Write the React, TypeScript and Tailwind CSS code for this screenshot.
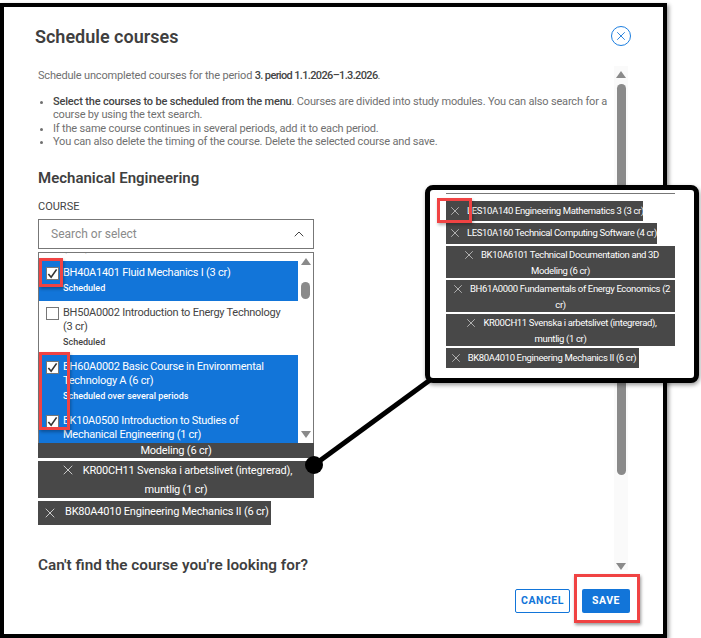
import { ChevronUp, X } from "lucide-react";

const font = "font-['Roboto',sans-serif]";

function CheckBox({ checked }: { checked?: boolean }) {
  return (
    <span className="mt-[1px] w-[13px] h-[13px] shrink-0 bg-white border border-[#777] flex items-center justify-center">
      {checked && (
        <svg viewBox="0 0 12 12" className="w-[11px] h-[11px]">
          <path d="M1.5 6.5 L4.5 10 L10.5 1.5" fill="none" stroke="#333" strokeWidth="1.8" />
        </svg>
      )}
    </span>
  );
}

function CourseItem({ title, note, checked, className = "" }: { title: string; note?: string; checked?: boolean; className?: string }) {
  return (
    <div className={`flex gap-[4px] pl-[7px] pr-2 pt-[5px] ${checked ? "bg-[#1275d9] text-white" : "bg-white text-[#444]"} ${className}`}>
      <CheckBox checked={checked} />
      <div className="min-w-0">
        <div className="text-[11px] tracking-[-0.25px] leading-[14px]">{title}</div>
        {note && <div className="text-[9px] leading-[14px] mt-[1px] font-medium">{note}</div>}
      </div>
    </div>
  );
}

function Triangle({ down }: { down?: boolean }) {
  return (
    <svg viewBox="0 0 10 7" className="w-[10px] h-[7px] shrink-0">
      <path d={down ? "M0 0 H10 L5 7 Z" : "M5 0 L10 7 H0 Z"} fill="#8a8a8a" />
    </svg>
  );
}

function CalloutChip({ label, className = "" }: { label: string; className?: string }) {
  return (
    <div className={`bg-[#484848] text-white text-[9.5px] tracking-[-0.35px] px-[2px] text-center ${className}`}>
      <X className="inline w-[14px] h-[14px] mr-[5px] text-[#ddd] align-[-4px]" strokeWidth={1.2} />
      {label}
    </div>
  );
}

export default function App() {
  return (
    <div className={`relative w-[701px] h-[638px] bg-white overflow-hidden ${font}`}>
      {/* Dialog frame */}
      <div className="w-[667px] h-[635px] mt-[3px] border-[4px] border-black shadow-[2px_2px_4px_rgba(0,0,0,0.4)] bg-white flex flex-col">
        <div className="flex items-center justify-between pl-[31px] pr-[32px] pt-[9px] h-[49px] shrink-0">
          <h1 className="text-[18px] font-semibold text-[#3f3f3f]">Schedule courses</h1>
          <span className="w-5 h-5 rounded-full border border-[#1b7ee0] flex items-center justify-center">
            <X className="w-[14px] h-[14px] text-[#1275d9]" strokeWidth={1.5} />
          </span>
        </div>

        <div className="flex pl-[34px] pr-[29px] flex-1 min-h-0 pt-[8px]">
          <div className="w-[570px] shrink-0">
            <p className="text-[11px] tracking-[-0.18px] leading-[14px] text-[#707070] mt-[5px]">
              Schedule uncompleted courses for the period <span className="text-[#444] font-medium tracking-[-0.65px]">3. period 1.1.2026–1.3.2026</span>.
            </p>
            <ul className="list-disc pl-[15px] mt-[12px] text-[11px] tracking-[-0.17px] leading-[13.4px] text-[#707070]">
              <li>
                <span className="text-[#444] font-medium">Select the courses to be scheduled from the menu</span>. Courses are divided into study modules. You can also search for a course by using the text search.
              </li>
              <li>If the same course continues in several periods, add it to each period.</li>
              <li>You can also delete the timing of the course. Delete the selected course and save.</li>
            </ul>
            <h2 className="text-[15px] font-semibold text-[#3f3f3f] mt-[19px] leading-[20px]">Mechanical Engineering</h2>
            <div className="text-[11px] text-[#444] mt-[12px] leading-[14px]">COURSE</div>

            <div className="w-[276px] mt-[5px] h-[30px] border border-[#777] flex items-center justify-between pl-[12px] pr-[6px]">
              <span className="text-[12px] text-[#8a8a8a]">Search or select</span>
              <ChevronUp className="w-4 h-4 text-[#444]" strokeWidth={1.5} />
            </div>

            <div className="w-[276px] mt-[3px] h-[191px] border border-[#777] border-b-0 flex overflow-hidden">
              <div className="w-[259px] shrink-0">
                <div className="h-[8px] overflow-hidden">
                  <div className="-mt-[12px] pl-[24px] text-[11px] leading-[14px] text-[#444]">(3 cr)</div>
                </div>
                <CourseItem checked title="BH40A1401 Fluid Mechanics I (3 cr)" note="Scheduled" className="h-[40px]" />
                <CourseItem title="BH50A0002 Introduction to Energy Technology (3 cr)" note="Scheduled" className="h-[54px]" />
                <CourseItem checked title="BH60A0002 Basic Course in Environmental Technology A (6 cr)" note="Scheduled over several periods" className="h-[54px]" />
                <CourseItem checked title="BK10A0500 Introduction to Studies of Mechanical Engineering (1 cr)" className="h-[36px]" />
              </div>
              <div className="flex-1 flex flex-col items-center justify-between pt-[5px] pb-[5px]">
                <div className="flex flex-col items-center gap-[17px]">
                  <Triangle />
                  <div className="w-[9px] h-[17px] rounded-full bg-[#8a8a8a]" />
                </div>
                <Triangle down />
              </div>
            </div>

            <div className="w-[276px] flex flex-col gap-[3px] text-[11px] tracking-[-0.2px]">
              <div className="bg-[#484848] text-white text-center h-[15px] leading-[15px]">Modeling (6 cr)</div>
              <div className="bg-[#484848] text-white text-center leading-[19px] h-[37px]">
                <X className="inline w-4 h-4 mr-[7px] text-[#ddd] align-[-4px]" strokeWidth={1.3} />
                KR00CH11 Svenska i arbetslivet (integrerad),
                <br />
                muntlig (1 cr)
              </div>
              <div className="self-start bg-[#484848] text-white h-[24px] w-[233px] flex items-center pl-[4px] gap-[7px]">
                <X className="w-4 h-4 shrink-0 text-[#ddd]" strokeWidth={1.3} />
                <span className="whitespace-nowrap">BK80A4010 Engineering Mechanics II (6 cr)</span>
              </div>
            </div>

            <h2 className="text-[15.3px] font-semibold text-[#3f3f3f] mt-[30px] leading-[20px]">Can't find the course you're looking for?</h2>
          </div>

          <div className="w-[14px] ml-[6px] mt-[2px] bg-[#fafafa] flex flex-col items-center h-[504px] pt-[5px]">
            <Triangle />
            <div className="w-[9px] flex-1 mt-[6px] mb-[88px] rounded-full bg-[#8a8a8a]" />
            <Triangle down />
          </div>
        </div>

        <div className="flex justify-end gap-[12px] pr-[33px] pb-[21px] shrink-0">
          <button className="w-[55px] h-[24px] border border-[#1275d9] rounded-[2px] text-[#1275d9] text-[10.5px] font-bold tracking-[0.5px] bg-white">CANCEL</button>
          <button className="w-[48px] h-[24px] rounded-[2px] bg-[#1275d9] text-white text-[10.5px] font-bold tracking-[0.5px]">SAVE</button>
        </div>
      </div>

      {/* Connector from chip to callout */}
      <svg className="absolute left-0 top-0 pointer-events-none" width="701" height="638">
        <line x1="314" y1="465" x2="430" y2="380" stroke="#000" strokeWidth="5" />
        <circle cx="314" cy="465" r="9" fill="#000" />
      </svg>

      {/* Zoom callout */}
      <div className="absolute left-[425px] top-[185px] w-[274px] h-[198px] bg-white border-[5px] border-black rounded-[8px] shadow-[1px_2px_4px_rgba(0,0,0,0.4)] pl-[16px] pr-[19px]">
        <div className="h-px bg-[#777] mt-[3px]" />
        <div className="flex flex-col items-start gap-[2px] mt-[7px]">
          <CalloutChip label="LES10A140 Engineering Mathematics 3 (3 cr)" className="w-[197px] h-[20px] leading-[20px] whitespace-nowrap" />
          <CalloutChip label="LES10A160 Technical Computing Software (4 cr)" className="w-[211px] h-[21px] leading-[20px] whitespace-nowrap" />
          <CalloutChip label="BK10A6101 Technical Documentation and 3D Modeling (6 cr)" className="w-[229px] h-[32px] pt-[1px] leading-[16px]" />
          <CalloutChip label="BH61A0000 Fundamentals of Energy Economics (2 cr)" className="w-[229px] h-[32px] pt-[1px] leading-[16px]" />
          <CalloutChip label={"KR00CH11 Svenska i arbetslivet (integrerad), muntlig\u00a0(1\u00a0cr)"} className="w-[229px] h-[32px] pt-[1px] leading-[16px]" />
          <CalloutChip label="BK80A4010 Engineering Mechanics II (6 cr)" className="w-[193px] h-[20px] leading-[20px] whitespace-nowrap" />
        </div>
      </div>

      {/* Red highlight boxes */}
      <div className="absolute left-[39px] top-[258px] w-[24px] h-[29px] border-[3px] border-[#f04343] shadow-[1px_2px_3px_rgba(0,0,0,0.3)]" />
      <div className="absolute left-[39px] top-[352px] w-[31px] h-[78px] border-[3px] border-[#f04343] shadow-[1px_2px_3px_rgba(0,0,0,0.3)]" />
      <div className="absolute left-[437px] top-[198px] w-[35px] h-[25px] border-[3px] border-[#f04343] shadow-[1px_2px_3px_rgba(0,0,0,0.3)]" />
      <div className="absolute left-[574px] top-[574px] w-[66px] h-[49px] border-[3px] border-[#f04343] shadow-[1px_2px_3px_rgba(0,0,0,0.4)]" />
    </div>
  );
}
